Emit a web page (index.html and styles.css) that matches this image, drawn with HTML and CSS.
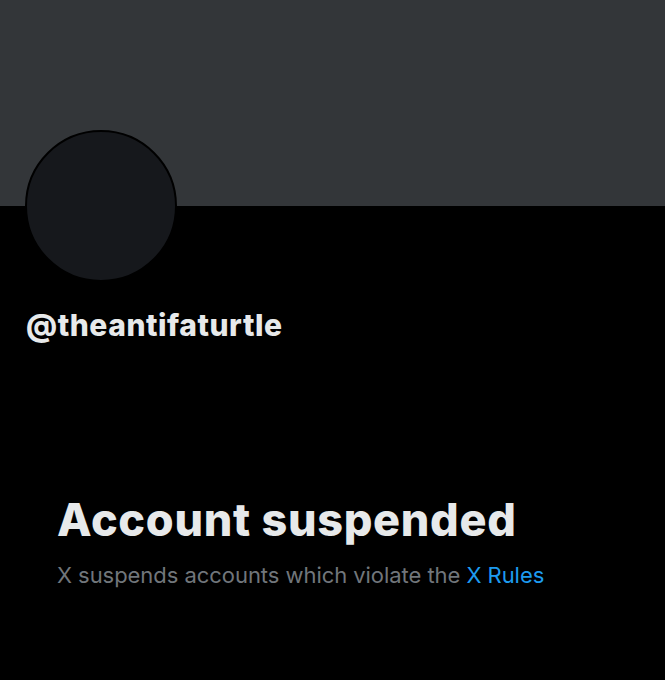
FILE: index.html
```html
<!DOCTYPE html>
<html lang="en">
<head>
  <meta charset="UTF-8" />
  <meta name="viewport" content="width=device-width, initial-scale=1.0"/>
  <title>@theantifaturtle</title>
  <link rel="stylesheet" href="styles.css">
</head>
<body>
  <div class="banner"></div>

  <div class="profile">
    <div class="avatar"></div>
    <div class="handle">@theantifaturtle</div>
  </div>

  <div class="notice">
    <h1>Account suspended</h1>
    <p>X suspends accounts which violate the <a href="#">X Rules</a></p>
  </div>
</body>
</html>
```
FILE: styles.css
```css
body {
  margin: 0;
  background-color: #000;
  color: #e7e9ea;
  font-family: Inter, "Liberation Sans", sans-serif;
  height: 680px;
  overflow: hidden;
}

.banner {
  height: 206px;
  background-color: #333639;
}

.profile {
  padding-left: 25px;
}

.avatar {
  width: 148px;
  height: 148px;
  margin-top: -76px;
  border-radius: 50%;
  border: 2px solid #000;
  background-color: #16181c;
}

.handle {
  margin-top: 25px;
  padding-left: 1px;
  font-size: 30px;
  font-weight: 800;
  line-height: 36px;
  letter-spacing: 0.55px;
}

.notice {
  padding-left: 57px;
  margin-top: 149px;
}

h1 {
  margin: 0;
  font-size: 45px;
  font-weight: 800;
  line-height: 56px;
  letter-spacing: 0.7px;
}

p {
  margin: 14px 0 0;
  font-size: 22px;
  letter-spacing: -0.05px;
  color: #71767b;
}

a {
  color: #1d9bf0;
  text-decoration: none;
}
```
